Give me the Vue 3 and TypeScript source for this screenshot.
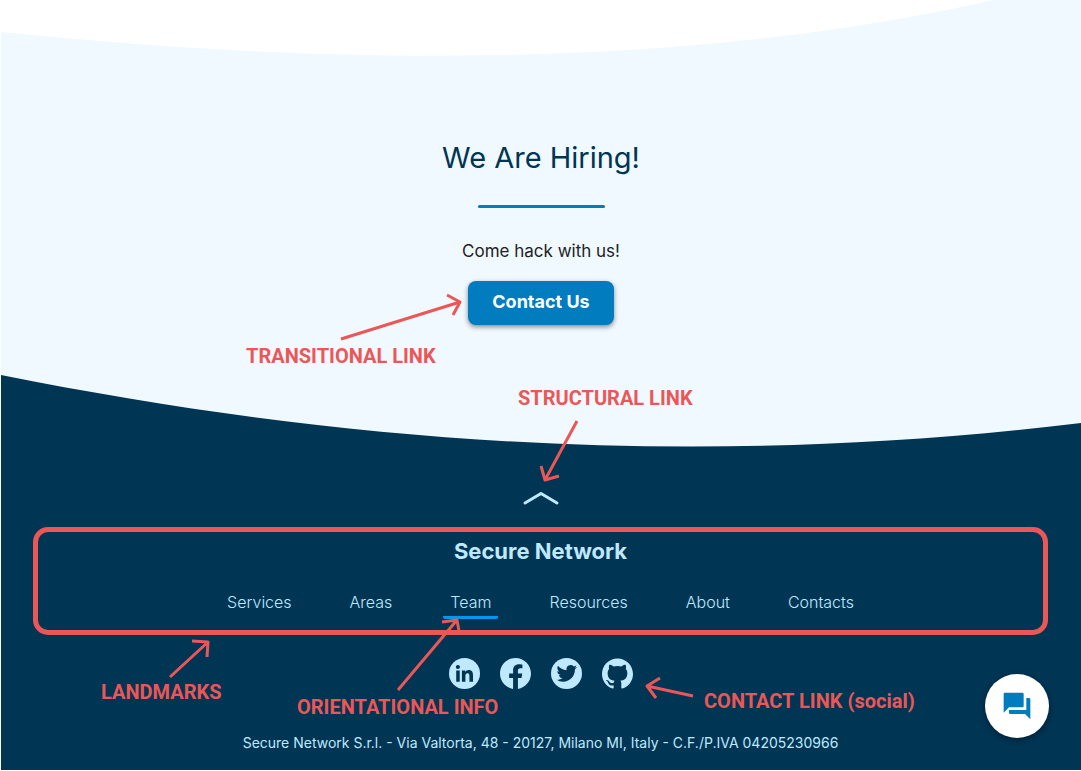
<script setup lang="ts">
interface NavItem {
  label: string
  href: string
  current?: boolean
}

const navItems: NavItem[] = [
  { label: 'Services', href: '#services' },
  { label: 'Areas', href: '#areas' },
  { label: 'Team', href: '#team', current: true },
  { label: 'Resources', href: '#resources' },
  { label: 'About', href: '#about' },
  { label: 'Contacts', href: '#contacts' },
]

const scrollToTop = (): void => window.scrollTo({ top: 0, behavior: 'smooth' })
</script>

<template>
  <div class="page">
    <main class="hero">
      <svg class="wave wave-top" viewBox="0 0 1080 56" preserveAspectRatio="none" aria-hidden="true">
        <path d="M0 32Q586 92 993 0H0Z" fill="#fff" />
      </svg>
      <h1>We Are Hiring!</h1>
      <div class="rule"></div>
      <p class="lead">Come hack with us!</p>
      <a class="cta" href="#contacts">Contact Us</a>
      <svg class="wave wave-bottom" viewBox="0 0 1080 72" preserveAspectRatio="none" aria-hidden="true">
        <path d="M0 0C340 68 690 95 1080 48V72H0Z" fill="#003554" />
      </svg>
    </main>

    <footer class="footer">
      <button class="to-top" type="button" aria-label="Back to top" @click="scrollToTop">
        <svg width="40" height="16" viewBox="0 0 40 16" fill="none" stroke="#bfe9ff" stroke-width="3" stroke-linecap="round" stroke-linejoin="round">
          <path d="M4 13 20 3.500 36 13" />
        </svg>
      </button>

      <section class="landmarks">
        <h2>Secure Network</h2>
        <nav aria-label="Footer">
          <a
            v-for="item in navItems"
            :key="item.label"
            :href="item.href"
            :class="{ current: item.current }"
            :aria-current="item.current ? 'page' : undefined"
          >{{ item.label }}</a>
        </nav>
      </section>

      <div class="social">
        <a href="#linkedin" aria-label="LinkedIn">
          <svg viewBox="0 0 24 24">
            <circle cx="12" cy="12" r="12" fill="#bfe9ff" />
            <g fill="#003554">
              <circle cx="6.900" cy="7" r="1.600" />
              <path d="M5.600 9.600h2.700v8.700H5.600zM10 9.600h2.600v1.200c.5-.8 1.500-1.500 2.700-1.500 2.700 0 3.300 1.800 3.300 4.300v4.700h-2.800v-4.200c0-1 0-2.300-1.400-2.300s-1.700 1.100-1.700 2.200v4.300H10z" />
            </g>
          </svg>
        </a>
        <a href="#facebook" aria-label="Facebook">
          <svg viewBox="0 0 24 24" fill="#bfe9ff">
            <path d="M24 12.073c0-6.627-5.373-12-12-12s-12 5.373-12 12c0 5.990 4.388 10.954 10.125 11.854v-8.385H7.078v-3.470h3.047V9.430c0-3.007 1.792-4.669 4.533-4.669 1.312 0 2.686.235 2.686.235v2.953H15.830c-1.491 0-1.956.925-1.956 1.874v2.250h3.328l-.532 3.470h-2.796v8.385C19.612 23.027 24 18.062 24 12.073z" />
          </svg>
        </a>
        <a href="#twitter" aria-label="Twitter">
          <svg viewBox="0 0 24 24">
            <circle cx="12" cy="12" r="12" fill="#bfe9ff" />
            <path transform="translate(4.300 4) scale(.66)" fill="#003554" d="M23.953 4.570a10 10 0 01-2.825.775 4.958 4.958 0 002.163-2.723c-.951.555-2.005.959-3.127 1.184a4.920 4.920 0 00-8.384 4.482C7.690 8.095 4.067 6.130 1.640 3.162a4.822 4.822 0 00-.666 2.475c0 1.710.87 3.213 2.188 4.096a4.904 4.904 0 01-2.228-.616v.06a4.923 4.923 0 003.946 4.827 4.996 4.996 0 01-2.212.085 4.936 4.936 0 004.604 3.417 9.867 9.867 0 01-6.102 2.105c-.39 0-.779-.023-1.170-.067a13.995 13.995 0 007.557 2.209c9.053 0 13.998-7.496 13.998-13.985 0-.21 0-.42-.015-.63A9.935 9.935 0 0024 4.590z" />
          </svg>
        </a>
        <a href="#github" aria-label="GitHub">
          <svg viewBox="0 0 24 24" fill="#bfe9ff">
            <path d="M12 .297c-6.630 0-12 5.373-12 12 0 5.303 3.438 9.800 8.205 11.385.6.113.82-.258.82-.577 0-.285-.01-1.040-.015-2.040-3.338.724-4.042-1.610-4.042-1.610C4.422 18.070 3.633 17.700 3.633 17.700c-1.087-.744.084-.729.084-.729 1.205.084 1.838 1.236 1.838 1.236 1.070 1.835 2.809 1.305 3.495.998.108-.776.417-1.305.76-1.605-2.665-.3-5.466-1.332-5.466-5.930 0-1.310.465-2.380 1.235-3.220-.135-.303-.54-1.523.105-3.176 0 0 1.005-.322 3.300 1.230.96-.267 1.980-.399 3-.405 1.020.006 2.040.138 3 .405 2.280-1.552 3.285-1.230 3.285-1.230.645 1.653.24 2.873.12 3.176.765.84 1.230 1.910 1.230 3.220 0 4.610-2.805 5.625-5.475 5.920.42.36.81 1.096.81 2.220 0 1.606-.015 2.896-.015 3.286 0 .315.21.69.825.57C20.565 22.092 24 17.592 24 12.297c0-6.627-5.373-12-12-12" />
          </svg>
        </a>
      </div>

      <p class="legal">Secure Network S.r.l. - Via Valtorta, 48 - 20127, Milano MI, Italy - C.F./P.IVA 04205230966</p>
    </footer>

    <button class="chat" type="button" aria-label="Open chat">
      <svg width="32" height="32" viewBox="0 0 24 24" fill="#007cbf">
        <path d="M17 12V3a1 1 0 0 0-1-1H3a1 1 0 0 0-1 1v14l4-4h10a1 1 0 0 0 1-1m4-6h-2v9H6v2a1 1 0 0 0 1 1h11l4 4V7a1 1 0 0 0-1-1" />
      </svg>
    </button>

    <div class="notes">
      <svg width="1080" height="770" viewBox="0 0 1080 770" fill="none" stroke="#eb5757" stroke-width="3" stroke-linejoin="round" aria-hidden="true">
        <path d="M340 339 459 302M446 295 459 302 452 315" />
        <path d="M576 421 544 480M540 466 544 480 558 476" />
        <path d="M169 677 207 642M191 641 207 642 206 657" />
        <path d="M397 690 456 620M441 622 456 620 458 631" />
        <path d="M692 696 646 686M659 678 646 686 655 698" />
      </svg>
      <span class="note transitional">TRANSITIONAL LINK</span>
      <span class="note structural">STRUCTURAL LINK</span>
      <span class="note landmark">LANDMARKS</span>
      <span class="note orientational">ORIENTATIONAL INFO</span>
      <span class="note contact">CONTACT LINK (social)</span>
    </div>
  </div>
</template>

<style>
body {
  margin: 0;
  background: #fff;
}
</style>

<style scoped>
.page {
  position: relative;
  margin: 0 0 1px 1px;
  overflow: hidden;
  font-family: Inter, "Liberation Sans", sans-serif;
}

.hero {
  display: flex;
  flex-direction: column;
  align-items: center;
  background: #f0f9ff;
}

.wave {
  display: block;
  width: 100%;
}

.wave-top {
  height: 56px;
}

.wave-bottom {
  height: 72px;
  margin-top: 50px;
}

h1 {
  margin: 82px 0 0;
  color: #003554;
  font-size: 29px;
  font-weight: 400;
  line-height: 40px;
}

.rule {
  width: 127px;
  height: 3px;
  margin-top: 27px;
  border-radius: 2px;
  background: #007cbf;
}

.lead {
  margin: 31px 0 0;
  color: #222;
  font-size: 17px;
  font-weight: 400;
  line-height: 24px;
}

.cta {
  margin-top: 18px;
  padding: 9px 24px 11px;
  border-radius: 8px;
  background: #007cbf;
  box-shadow: 0 2px 5px rgba(0, 0, 0, 0.45);
  color: #fff;
  font-size: 18px;
  font-weight: 700;
  line-height: 24px;
  text-decoration: none;
}

.footer {
  display: flex;
  flex-direction: column;
  align-items: center;
  padding: 43px 33px 15px 32px;
  background: #003554;
  color: #bfe9ff;
}

.to-top {
  display: flex;
  padding: 0;
  border: 0;
  background: none;
  cursor: pointer;
}

.landmarks {
  box-sizing: border-box;
  width: 100%;
  margin-top: 21px;
  padding: 5px 0 11px;
  border: 5px solid #eb5757;
  border-radius: 15px;
}

h2 {
  margin: 0;
  font-size: 22px;
  font-weight: 700;
  line-height: 28px;
  text-align: center;
}

nav {
  display: flex;
  flex-wrap: wrap;
  justify-content: center;
  gap: 0 44px;
  margin-top: 25px;
}

nav a {
  padding: 0 7px 2px;
  border-bottom: 3px solid transparent;
  border-radius: 2px;
  color: #bfe9ff;
  font-size: 16px;
  font-weight: 300;
  line-height: 24px;
  text-decoration: none;
}

nav .current {
  border-bottom-color: #0098ed;
}

.social {
  display: flex;
  gap: 20px;
  margin-top: 23px;
}

.social a,
.social svg {
  display: block;
  width: 31px;
  height: 31px;
}

.legal {
  margin: 42px 0 0;
  font-size: 14px;
  font-weight: 400;
  line-height: 24px;
  text-align: center;
}

.chat {
  position: absolute;
  right: 32px;
  bottom: 32px;
  display: flex;
  align-items: center;
  justify-content: center;
  width: 64px;
  height: 64px;
  padding: 0;
  border: 0;
  border-radius: 50%;
  background: #fff;
  box-shadow: 0 2px 6px rgba(0, 0, 0, 0.4);
  cursor: pointer;
}

.notes {
  position: absolute;
  top: 0;
  left: 50%;
  width: 1080px;
  height: 770px;
  margin-left: -540px;
  pointer-events: none;
}

.notes svg {
  display: block;
}

.note {
  position: absolute;
  color: #eb5757;
  font-family: Roboto, sans-serif;
  font-size: 20px;
  font-weight: 700;
  line-height: 24px;
  white-space: nowrap;
}

.transitional {
  top: 344px;
  left: 245px;
}

.structural {
  top: 386px;
  left: 517px;
}

.landmark {
  top: 680px;
  left: 100px;
}

.orientational {
  top: 695px;
  left: 296px;
}

.contact {
  top: 689px;
  left: 703px;
}
</style>
